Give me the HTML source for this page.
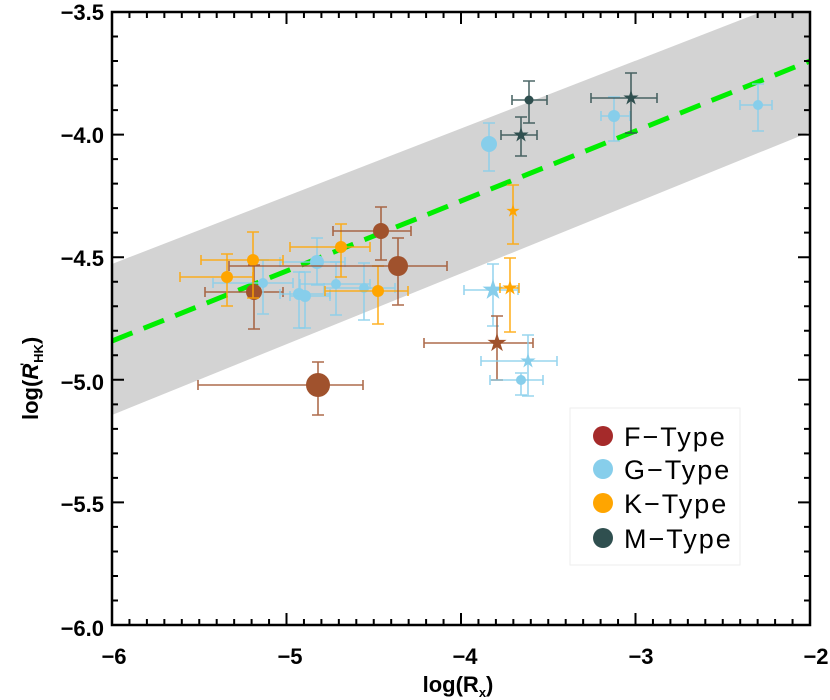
<!DOCTYPE html>
<html><head><meta charset="utf-8"><style>
body{margin:0;background:#fff;width:830px;height:700px;overflow:hidden}
svg{display:block}
text{font-family:"Liberation Sans",sans-serif;font-weight:bold;fill:#000}
</style></head><body>
<svg id="s" width="830" height="700" viewBox="0 0 830 700">
<defs>
<clipPath id="c"><rect x="112" y="12" width="698" height="613"/></clipPath>
<polygon id="star" points="0,-1 0.225,-0.309 0.951,-0.309 0.363,0.118 0.588,0.809 0,0.382 -0.588,0.809 -0.363,0.118 -0.951,-0.309 -0.225,-0.309"/>
</defs>
<g clip-path="url(#c)">
<polygon points="112,264 810,-7 810,132 112,415" fill="#d3d3d3"/>
<line x1="112" y1="341" x2="810" y2="61" stroke="#00ee00" stroke-width="5" stroke-dasharray="22,12"/>
<g id="pts"></g>
</g>
<g id="ticks" stroke="#000" stroke-width="2"></g>
<rect x="112" y="12" width="698" height="613" fill="none" stroke="#000" stroke-width="2.5"/>
<g font-size="22" text-anchor="end">
<text x="104" y="20">−3.5</text>
<text x="104" y="143">−4.0</text>
<text x="104" y="266">−4.5</text>
<text x="104" y="390">−5.0</text>
<text x="104" y="512">−5.5</text>
<text x="104" y="636">−6.0</text>
</g>
<g font-size="22" text-anchor="middle">
<text x="114" y="664">−6</text>
<text x="290" y="664">−5</text>
<text x="465" y="664">−4</text>
<text x="641" y="664">−3</text>
<text x="816" y="664">−2</text>
<text x="458" y="692">log(R<tspan font-size="13" dy="5">x</tspan><tspan dy="-5">)</tspan></text>
</g>
<text font-size="22" transform="translate(38,420) rotate(-90)">log(<tspan font-style="italic">R</tspan><tspan font-size="12" dy="-9" dx="-2">'</tspan><tspan font-size="13" dy="14">HK</tspan><tspan dy="-5">)</tspan></text>
<rect x="570" y="408" width="170" height="157" fill="#fff" stroke="#eee"/>
<circle cx="603" cy="436" r="10" fill="#a52a2a"/>
<circle cx="603" cy="469" r="10" fill="#87ceeb"/>
<circle cx="603" cy="503" r="10" fill="#ffa500"/>
<circle cx="603" cy="538" r="10" fill="#2f4f4f"/>
<g font-size="27" letter-spacing="2">
<text x="624" y="446" style="font-weight:normal">F−Type</text>
<text x="624" y="479" style="font-weight:normal">G−Type</text>
<text x="624" y="513" style="font-weight:normal">K−Type</text>
<text x="624" y="548" style="font-weight:normal">M−Type</text>
</g>
</svg>
<script>
var NS="http://www.w3.org/2000/svg";
var t=document.getElementById('ticks'),d="";
for(var i=0;i<=40;i++){var x=112+i*17.45,L=(i%10==0)?12:6;d+="M"+x+" 625v-"+L+"M"+x+" 12v"+L;}
for(var j=0;j<=25;j++){var y=12+j*24.52,L=(j%5==0)?12:6;d+="M112 "+y+"h"+L+"M810 "+y+"h-"+L;}
var p=document.createElementNS(NS,'path');p.setAttribute('d',d);t.appendChild(p);
var C={F:"#a0522d",G:"#87ceeb",K:"#ffa500",M:"#2f4f4f"};
var P=[
["F",318,385,12,198,363,362,415],
["F",254,292,8,205,283,265,329],
["G",317,262,7,280,345,238,285],
["G",263,283,5,213,293,260,314],
["G",299,294,6,280,330,272,328],
["G",305,296,6,290,330,272,328],
["G",336,284,5,300,370,262,315],
["G",364,288,5,324,395,263,320],
["K",253,260,6,201,283,232,298],
["K",227,277,6,180,253,254,306],
["K",341,247,6,290,370,224,277],
["K",378,291,6,325,408,266,324],
["F",381,231,8,333,411,207,260],
["F",398,266,10,229,447,238,305],
["G",489,144,8,489,489,123,171],
["G",614,116,6,601,630,97,141],
["G",758,105,5,740,772,84,131],
["M",529,100,4.5,512,547,81,123],
["M",521,135,8,501,537,117,156,1],
["M",631,98,8,591,657,73,133,1],
["K",513,211,7,513,513,185,244,1],
["G",493,290,11,464,518,264,326,1],
["K",510,288,8,500,519,258,332,1],
["F",497,343,10,424,533,316,380,1],
["G",528,361,8,481,557,335,396,1],
["G",521,380,5,490,543,373,395]
];
var g=document.getElementById('pts');
P.forEach(function(a){var c=C[a[0]],x=a[1],y=a[2],dd="";
if(a[4]!=a[5])dd+="M"+a[4]+" "+y+"H"+a[5]+"M"+a[4]+" "+(y-5)+"v10M"+a[5]+" "+(y-5)+"v10";
dd+="M"+x+" "+a[6]+"V"+a[7]+"M"+(x-6)+" "+a[6]+"h12M"+(x-6)+" "+a[7]+"h12";
var e=document.createElementNS(NS,'path');e.setAttribute('d',dd);e.setAttribute('stroke',c);e.setAttribute('stroke-width','1.6');e.setAttribute('fill','none');e.setAttribute('opacity','0.85');g.appendChild(e);
var m;
if(a[8]){m=document.createElementNS(NS,'use');m.setAttribute('href','#star');m.setAttribute('transform','translate('+x+','+y+') scale('+a[3]+')');}
else{m=document.createElementNS(NS,'circle');m.setAttribute('cx',x);m.setAttribute('cy',y);m.setAttribute('r',a[3]);}
m.setAttribute('fill',c);g.appendChild(m);});
</script>
</body></html>
